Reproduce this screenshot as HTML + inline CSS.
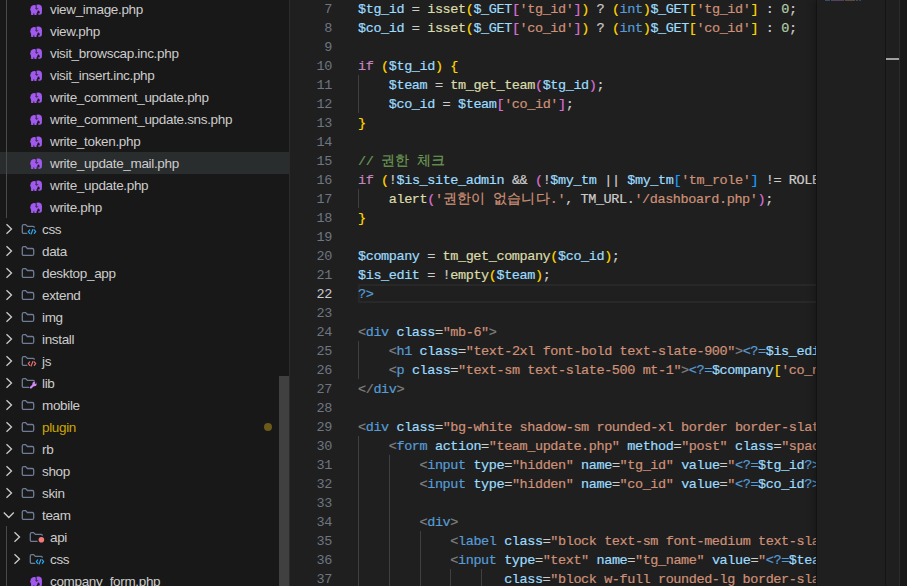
<!DOCTYPE html>
<html><head><meta charset="utf-8"><style>
html,body{margin:0;padding:0;width:907px;height:586px;overflow:hidden;background:#1f1f1f}
#side{position:absolute;left:0;top:0;width:289px;height:586px;background:#181818;overflow:hidden}
#sideb{position:absolute;left:289px;top:0;width:1px;height:586px;background:#2b2b2b}
.row{position:absolute;left:0;width:289px;height:22px}
.row.sel{background:#2a2d2e}
.nm{position:absolute;top:4px;height:22px;line-height:22px;font:13.5px "Liberation Sans",sans-serif;letter-spacing:-0.33px;color:#cccccc;white-space:pre}
.ic,.fic,.chev{display:block}
.dot{position:absolute;left:264px;top:7px;width:8px;height:8px;border-radius:50%;background:#6b5a1a}
#sscroll{position:absolute;left:279px;top:376px;width:10px;height:210px;background:#404040}
.iguide{position:absolute;left:6px;width:1px;background:#4a4a4a}
#editor{position:absolute;left:290px;top:0;width:617px;height:586px;background:#1f1f1f;overflow:hidden}
.ln{position:absolute;left:358px;height:19px;line-height:19px;font:13.5px "Liberation Mono",monospace;letter-spacing:-0.410px;white-space:pre;color:#cccccc;margin-top:3px;-webkit-text-stroke:0.2px}
.ko{font-size:14px;letter-spacing:0.2px;line-height:10px}
.num{position:absolute;left:290px;width:42px;text-align:right;height:19px;line-height:19px;font:13.5px "Liberation Mono",monospace;letter-spacing:-0.4px;color:#6e7681;margin-top:3px}
.num.act{color:#cccccc}
.guide{position:absolute;width:1px;height:19px;background:#404040}
#codeclip{position:absolute;left:0;top:0;width:816px;height:586px;overflow:hidden}
#curline{position:absolute;left:358px;width:458px;top:284px;height:15px;border:2px solid #282828;border-right:none}
#minimap{position:absolute;left:817px;top:0;width:68px;height:586px;background:#1f1f1f;box-shadow:-5px 0 6px -1px rgba(0,0,0,0.22)}
#mmsh{position:absolute;left:816px;top:0;width:1px;height:586px;background:#171717}
#vsb{position:absolute;left:885px;top:0;width:1px;height:586px;background:#151515}
#vsb2{position:absolute;left:899px;top:0;width:1px;height:586px;background:#2b2b2b}
#rightp{position:absolute;left:900px;top:0;width:7px;height:586px;background:#181818}
#cursorind{position:absolute;left:886px;top:58px;width:13px;height:2px;background:#a0a0a0}
.mm{position:absolute;top:0;height:1px}
</style></head><body>
<div id="editor"></div>
<div id="curline"></div>
<div id="codeclip"><div class="ln" style="top:-1px"><span style="color:#9cdcfe">$tg_id</span><span style="color:#cccccc"> = </span><span style="color:#dcdcaa">isset</span><span style="color:#ffd700">(</span><span style="color:#9cdcfe">$_GET</span><span style="color:#da70d6">[</span><span style="color:#ce9178">'tg_id'</span><span style="color:#da70d6">]</span><span style="color:#ffd700">)</span><span style="color:#cccccc"> ? </span><span style="color:#ffd700">(</span><span style="color:#569cd6">int</span><span style="color:#ffd700">)</span><span style="color:#9cdcfe">$_GET</span><span style="color:#ffd700">[</span><span style="color:#ce9178">'tg_id'</span><span style="color:#ffd700">]</span><span style="color:#cccccc"> : </span><span style="color:#b5cea8">0</span><span style="color:#cccccc">;</span></div><div class="num" style="top:-1px">7</div><div class="ln" style="top:18px"><span style="color:#9cdcfe">$co_id</span><span style="color:#cccccc"> = </span><span style="color:#dcdcaa">isset</span><span style="color:#ffd700">(</span><span style="color:#9cdcfe">$_GET</span><span style="color:#da70d6">[</span><span style="color:#ce9178">'co_id'</span><span style="color:#da70d6">]</span><span style="color:#ffd700">)</span><span style="color:#cccccc"> ? </span><span style="color:#ffd700">(</span><span style="color:#569cd6">int</span><span style="color:#ffd700">)</span><span style="color:#9cdcfe">$_GET</span><span style="color:#ffd700">[</span><span style="color:#ce9178">'co_id'</span><span style="color:#ffd700">]</span><span style="color:#cccccc"> : </span><span style="color:#b5cea8">0</span><span style="color:#cccccc">;</span></div><div class="num" style="top:18px">8</div><div class="ln" style="top:37px"></div><div class="num" style="top:37px">9</div><div class="ln" style="top:56px"><span style="color:#c586c0">if</span><span style="color:#cccccc"> </span><span style="color:#ffd700">(</span><span style="color:#9cdcfe">$tg_id</span><span style="color:#ffd700">)</span><span style="color:#cccccc"> </span><span style="color:#ffd700">{</span></div><div class="num" style="top:56px">10</div><div class="ln" style="top:75px"><span style="color:#cccccc">    </span><span style="color:#9cdcfe">$team</span><span style="color:#cccccc"> = </span><span style="color:#dcdcaa">tm_get_team</span><span style="color:#da70d6">(</span><span style="color:#9cdcfe">$tg_id</span><span style="color:#da70d6">)</span><span style="color:#cccccc">;</span></div><div class="num" style="top:75px">11</div><div class="guide" style="top:75px;left:358px"></div><div class="ln" style="top:94px"><span style="color:#cccccc">    </span><span style="color:#9cdcfe">$co_id</span><span style="color:#cccccc"> = </span><span style="color:#9cdcfe">$team</span><span style="color:#da70d6">[</span><span style="color:#ce9178">'co_id'</span><span style="color:#da70d6">]</span><span style="color:#cccccc">;</span></div><div class="num" style="top:94px">12</div><div class="guide" style="top:94px;left:358px"></div><div class="ln" style="top:113px"><span style="color:#ffd700">}</span></div><div class="num" style="top:113px">13</div><div class="ln" style="top:132px"></div><div class="num" style="top:132px">14</div><div class="ln" style="top:151px"><span style="color:#6a9955">// </span><span class="ko" style="color:#6a9955">권한</span><span style="color:#6a9955"> </span><span class="ko" style="color:#6a9955">체크</span></div><div class="num" style="top:151px">15</div><div class="ln" style="top:170px"><span style="color:#c586c0">if</span><span style="color:#cccccc"> </span><span style="color:#ffd700">(</span><span style="color:#cccccc">!</span><span style="color:#9cdcfe">$is_site_admin</span><span style="color:#cccccc"> &amp;&amp; </span><span style="color:#da70d6">(</span><span style="color:#cccccc">!</span><span style="color:#9cdcfe">$my_tm</span><span style="color:#cccccc"> || </span><span style="color:#9cdcfe">$my_tm</span><span style="color:#179fff">[</span><span style="color:#ce9178">'tm_role'</span><span style="color:#179fff">]</span><span style="color:#cccccc"> != ROLE_ADMIN</span></div><div class="num" style="top:170px">16</div><div class="ln" style="top:189px"><span style="color:#cccccc">    </span><span style="color:#dcdcaa">alert</span><span style="color:#da70d6">(</span><span style="color:#ce9178">'</span><span class="ko" style="color:#ce9178">권한이</span><span style="color:#ce9178"> </span><span class="ko" style="color:#ce9178">없습니다</span><span style="color:#ce9178">.'</span><span style="color:#cccccc">, TM_URL.</span><span style="color:#ce9178">'/dashboard.php'</span><span style="color:#da70d6">)</span><span style="color:#cccccc">;</span></div><div class="num" style="top:189px">17</div><div class="guide" style="top:189px;left:358px"></div><div class="ln" style="top:208px"><span style="color:#ffd700">}</span></div><div class="num" style="top:208px">18</div><div class="ln" style="top:227px"></div><div class="num" style="top:227px">19</div><div class="ln" style="top:246px"><span style="color:#9cdcfe">$company</span><span style="color:#cccccc"> = </span><span style="color:#dcdcaa">tm_get_company</span><span style="color:#ffd700">(</span><span style="color:#9cdcfe">$co_id</span><span style="color:#ffd700">)</span><span style="color:#cccccc">;</span></div><div class="num" style="top:246px">20</div><div class="ln" style="top:265px"><span style="color:#9cdcfe">$is_edit</span><span style="color:#cccccc"> = </span><span style="color:#cccccc">!</span><span style="color:#dcdcaa">empty</span><span style="color:#ffd700">(</span><span style="color:#9cdcfe">$team</span><span style="color:#ffd700">)</span><span style="color:#cccccc">;</span></div><div class="num" style="top:265px">21</div><div class="ln" style="top:284px"><span style="color:#569cd6">?&gt;</span></div><div class="num act" style="top:284px">22</div><div class="ln" style="top:303px"></div><div class="num" style="top:303px">23</div><div class="ln" style="top:322px"><span style="color:#808080">&lt;</span><span style="color:#569cd6">div</span><span style="color:#cccccc"> </span><span style="color:#9cdcfe">class</span><span style="color:#cccccc">=</span><span style="color:#ce9178">"mb-6"</span><span style="color:#808080">&gt;</span></div><div class="num" style="top:322px">24</div><div class="ln" style="top:341px"><span style="color:#cccccc">    </span><span style="color:#808080">&lt;</span><span style="color:#569cd6">h1</span><span style="color:#cccccc"> </span><span style="color:#9cdcfe">class</span><span style="color:#cccccc">=</span><span style="color:#ce9178">"text-2xl font-bold text-slate-900"</span><span style="color:#808080">&gt;</span><span style="color:#569cd6">&lt;?=</span><span style="color:#9cdcfe">$is_edit</span><span style="color:#cccccc"> ? </span></div><div class="num" style="top:341px">25</div><div class="guide" style="top:341px;left:358px"></div><div class="ln" style="top:360px"><span style="color:#cccccc">    </span><span style="color:#808080">&lt;</span><span style="color:#569cd6">p</span><span style="color:#cccccc"> </span><span style="color:#9cdcfe">class</span><span style="color:#cccccc">=</span><span style="color:#ce9178">"text-sm text-slate-500 mt-1"</span><span style="color:#808080">&gt;</span><span style="color:#569cd6">&lt;?=</span><span style="color:#9cdcfe">$company</span><span style="color:#ffd700">[</span><span style="color:#ce9178">'co_name'</span></div><div class="num" style="top:360px">26</div><div class="guide" style="top:360px;left:358px"></div><div class="ln" style="top:379px"><span style="color:#808080">&lt;/</span><span style="color:#569cd6">div</span><span style="color:#808080">&gt;</span></div><div class="num" style="top:379px">27</div><div class="ln" style="top:398px"></div><div class="num" style="top:398px">28</div><div class="ln" style="top:417px"><span style="color:#808080">&lt;</span><span style="color:#569cd6">div</span><span style="color:#cccccc"> </span><span style="color:#9cdcfe">class</span><span style="color:#cccccc">=</span><span style="color:#ce9178">"bg-white shadow-sm rounded-xl border border-slate-200 p-6"</span></div><div class="num" style="top:417px">29</div><div class="ln" style="top:436px"><span style="color:#cccccc">    </span><span style="color:#808080">&lt;</span><span style="color:#569cd6">form</span><span style="color:#cccccc"> </span><span style="color:#9cdcfe">action</span><span style="color:#cccccc">=</span><span style="color:#ce9178">"team_update.php"</span><span style="color:#cccccc"> </span><span style="color:#9cdcfe">method</span><span style="color:#cccccc">=</span><span style="color:#ce9178">"post"</span><span style="color:#cccccc"> </span><span style="color:#9cdcfe">class</span><span style="color:#cccccc">=</span><span style="color:#ce9178">"space-y-5"</span></div><div class="num" style="top:436px">30</div><div class="guide" style="top:436px;left:358px"></div><div class="ln" style="top:455px"><span style="color:#cccccc">        </span><span style="color:#808080">&lt;</span><span style="color:#569cd6">input</span><span style="color:#cccccc"> </span><span style="color:#9cdcfe">type</span><span style="color:#cccccc">=</span><span style="color:#ce9178">"hidden"</span><span style="color:#cccccc"> </span><span style="color:#9cdcfe">name</span><span style="color:#cccccc">=</span><span style="color:#ce9178">"tg_id"</span><span style="color:#cccccc"> </span><span style="color:#9cdcfe">value</span><span style="color:#cccccc">=</span><span style="color:#ce9178">"</span><span style="color:#569cd6">&lt;?=</span><span style="color:#9cdcfe">$tg_id</span><span style="color:#569cd6">?&gt;</span><span style="color:#ce9178">"</span><span style="color:#808080">&gt;</span></div><div class="num" style="top:455px">31</div><div class="guide" style="top:455px;left:358px"></div><div class="guide" style="top:455px;left:389px"></div><div class="ln" style="top:474px"><span style="color:#cccccc">        </span><span style="color:#808080">&lt;</span><span style="color:#569cd6">input</span><span style="color:#cccccc"> </span><span style="color:#9cdcfe">type</span><span style="color:#cccccc">=</span><span style="color:#ce9178">"hidden"</span><span style="color:#cccccc"> </span><span style="color:#9cdcfe">name</span><span style="color:#cccccc">=</span><span style="color:#ce9178">"co_id"</span><span style="color:#cccccc"> </span><span style="color:#9cdcfe">value</span><span style="color:#cccccc">=</span><span style="color:#ce9178">"</span><span style="color:#569cd6">&lt;?=</span><span style="color:#9cdcfe">$co_id</span><span style="color:#569cd6">?&gt;</span><span style="color:#ce9178">"</span><span style="color:#808080">&gt;</span></div><div class="num" style="top:474px">32</div><div class="guide" style="top:474px;left:358px"></div><div class="guide" style="top:474px;left:389px"></div><div class="ln" style="top:493px"></div><div class="num" style="top:493px">33</div><div class="guide" style="top:493px;left:358px"></div><div class="guide" style="top:493px;left:389px"></div><div class="ln" style="top:512px"><span style="color:#cccccc">        </span><span style="color:#808080">&lt;</span><span style="color:#569cd6">div</span><span style="color:#808080">&gt;</span></div><div class="num" style="top:512px">34</div><div class="guide" style="top:512px;left:358px"></div><div class="guide" style="top:512px;left:389px"></div><div class="ln" style="top:531px"><span style="color:#cccccc">            </span><span style="color:#808080">&lt;</span><span style="color:#569cd6">label</span><span style="color:#cccccc"> </span><span style="color:#9cdcfe">class</span><span style="color:#cccccc">=</span><span style="color:#ce9178">"block text-sm font-medium text-slate-700 mb-1"</span></div><div class="num" style="top:531px">35</div><div class="guide" style="top:531px;left:358px"></div><div class="guide" style="top:531px;left:389px"></div><div class="guide" style="top:531px;left:420px"></div><div class="ln" style="top:550px"><span style="color:#cccccc">            </span><span style="color:#808080">&lt;</span><span style="color:#569cd6">input</span><span style="color:#cccccc"> </span><span style="color:#9cdcfe">type</span><span style="color:#cccccc">=</span><span style="color:#ce9178">"text"</span><span style="color:#cccccc"> </span><span style="color:#9cdcfe">name</span><span style="color:#cccccc">=</span><span style="color:#ce9178">"tg_name"</span><span style="color:#cccccc"> </span><span style="color:#9cdcfe">value</span><span style="color:#cccccc">=</span><span style="color:#ce9178">"</span><span style="color:#569cd6">&lt;?=</span><span style="color:#9cdcfe">$team</span><span style="color:#ffd700">[</span><span style="color:#ce9178">'tg_name'</span></div><div class="num" style="top:550px">36</div><div class="guide" style="top:550px;left:358px"></div><div class="guide" style="top:550px;left:389px"></div><div class="guide" style="top:550px;left:420px"></div><div class="ln" style="top:569px"><span style="color:#cccccc">                   </span><span style="color:#9cdcfe">class</span><span style="color:#cccccc">=</span><span style="color:#ce9178">"block w-full rounded-lg border-slate-300"</span></div><div class="num" style="top:569px">37</div><div class="guide" style="top:569px;left:358px"></div><div class="guide" style="top:569px;left:389px"></div><div class="guide" style="top:569px;left:420px"></div><div class="guide" style="top:569px;left:450px"></div><div class="guide" style="top:569px;left:481px"></div></div>
<div id="mmsh"></div>
<div id="minimap">
<div class="mm" style="left:8px;width:5px;background:#2e4f6e"></div>
<div class="mm" style="left:14px;width:13px;background:#54405f"></div>
<div class="mm" style="left:28px;width:10px;background:#5e4a3c"></div>
<div class="mm" style="left:39px;width:2px;background:#484848"></div>
<div class="mm" style="left:42px;width:2px;background:#2e4a66"></div>
</div>
<div id="vsb"></div><div id="vsb2"></div><div id="rightp"></div><div id="cursorind"></div>
<div id="side">
<div class="row" style="top:-2px"><span style="position:absolute;left:30px;top:5px"><svg class="ic" width="12" height="12" viewBox="0 0 12 12"><g fill="#a259f0"><ellipse cx="4.4" cy="6.2" rx="4.1" ry="4.3"/><rect x="1.1" y="8" width="2.3" height="3.9" rx=".4"/><rect x="4.3" y="8" width="2.3" height="3.9" rx=".4"/><circle cx="8.2" cy="5.1" r="3.7"/><path d="M9.3 5h2.6v4.6c0 1.5-1 2.2-2.3 2.2-1 0-1.7-.5-1.9-1.3h1.4c.4 0 .6-.3.6-.7z"/></g><g fill="none" stroke="#1a1a1a"><path stroke-width="1" d="M5.4 1.2c1 1.3 1.1 2.9.5 4.7c.8.4 1.6.2 2.1-.6"/></g><circle cx="8.4" cy="8.4" r=".9" fill="#1a1a1a"/></svg></span><span class="nm" style="left:50px">view_image.php</span></div><div class="row" style="top:20px"><span style="position:absolute;left:30px;top:5px"><svg class="ic" width="12" height="12" viewBox="0 0 12 12"><g fill="#a259f0"><ellipse cx="4.4" cy="6.2" rx="4.1" ry="4.3"/><rect x="1.1" y="8" width="2.3" height="3.9" rx=".4"/><rect x="4.3" y="8" width="2.3" height="3.9" rx=".4"/><circle cx="8.2" cy="5.1" r="3.7"/><path d="M9.3 5h2.6v4.6c0 1.5-1 2.2-2.3 2.2-1 0-1.7-.5-1.9-1.3h1.4c.4 0 .6-.3.6-.7z"/></g><g fill="none" stroke="#1a1a1a"><path stroke-width="1" d="M5.4 1.2c1 1.3 1.1 2.9.5 4.7c.8.4 1.6.2 2.1-.6"/></g><circle cx="8.4" cy="8.4" r=".9" fill="#1a1a1a"/></svg></span><span class="nm" style="left:50px">view.php</span></div><div class="row" style="top:42px"><span style="position:absolute;left:30px;top:5px"><svg class="ic" width="12" height="12" viewBox="0 0 12 12"><g fill="#a259f0"><ellipse cx="4.4" cy="6.2" rx="4.1" ry="4.3"/><rect x="1.1" y="8" width="2.3" height="3.9" rx=".4"/><rect x="4.3" y="8" width="2.3" height="3.9" rx=".4"/><circle cx="8.2" cy="5.1" r="3.7"/><path d="M9.3 5h2.6v4.6c0 1.5-1 2.2-2.3 2.2-1 0-1.7-.5-1.9-1.3h1.4c.4 0 .6-.3.6-.7z"/></g><g fill="none" stroke="#1a1a1a"><path stroke-width="1" d="M5.4 1.2c1 1.3 1.1 2.9.5 4.7c.8.4 1.6.2 2.1-.6"/></g><circle cx="8.4" cy="8.4" r=".9" fill="#1a1a1a"/></svg></span><span class="nm" style="left:50px">visit_browscap.inc.php</span></div><div class="row" style="top:64px"><span style="position:absolute;left:30px;top:5px"><svg class="ic" width="12" height="12" viewBox="0 0 12 12"><g fill="#a259f0"><ellipse cx="4.4" cy="6.2" rx="4.1" ry="4.3"/><rect x="1.1" y="8" width="2.3" height="3.9" rx=".4"/><rect x="4.3" y="8" width="2.3" height="3.9" rx=".4"/><circle cx="8.2" cy="5.1" r="3.7"/><path d="M9.3 5h2.6v4.6c0 1.5-1 2.2-2.3 2.2-1 0-1.7-.5-1.9-1.3h1.4c.4 0 .6-.3.6-.7z"/></g><g fill="none" stroke="#1a1a1a"><path stroke-width="1" d="M5.4 1.2c1 1.3 1.1 2.9.5 4.7c.8.4 1.6.2 2.1-.6"/></g><circle cx="8.4" cy="8.4" r=".9" fill="#1a1a1a"/></svg></span><span class="nm" style="left:50px">visit_insert.inc.php</span></div><div class="row" style="top:86px"><span style="position:absolute;left:30px;top:5px"><svg class="ic" width="12" height="12" viewBox="0 0 12 12"><g fill="#a259f0"><ellipse cx="4.4" cy="6.2" rx="4.1" ry="4.3"/><rect x="1.1" y="8" width="2.3" height="3.9" rx=".4"/><rect x="4.3" y="8" width="2.3" height="3.9" rx=".4"/><circle cx="8.2" cy="5.1" r="3.7"/><path d="M9.3 5h2.6v4.6c0 1.5-1 2.2-2.3 2.2-1 0-1.7-.5-1.9-1.3h1.4c.4 0 .6-.3.6-.7z"/></g><g fill="none" stroke="#1a1a1a"><path stroke-width="1" d="M5.4 1.2c1 1.3 1.1 2.9.5 4.7c.8.4 1.6.2 2.1-.6"/></g><circle cx="8.4" cy="8.4" r=".9" fill="#1a1a1a"/></svg></span><span class="nm" style="left:50px">write_comment_update.php</span></div><div class="row" style="top:108px"><span style="position:absolute;left:30px;top:5px"><svg class="ic" width="12" height="12" viewBox="0 0 12 12"><g fill="#a259f0"><ellipse cx="4.4" cy="6.2" rx="4.1" ry="4.3"/><rect x="1.1" y="8" width="2.3" height="3.9" rx=".4"/><rect x="4.3" y="8" width="2.3" height="3.9" rx=".4"/><circle cx="8.2" cy="5.1" r="3.7"/><path d="M9.3 5h2.6v4.6c0 1.5-1 2.2-2.3 2.2-1 0-1.7-.5-1.9-1.3h1.4c.4 0 .6-.3.6-.7z"/></g><g fill="none" stroke="#1a1a1a"><path stroke-width="1" d="M5.4 1.2c1 1.3 1.1 2.9.5 4.7c.8.4 1.6.2 2.1-.6"/></g><circle cx="8.4" cy="8.4" r=".9" fill="#1a1a1a"/></svg></span><span class="nm" style="left:50px">write_comment_update.sns.php</span></div><div class="row" style="top:130px"><span style="position:absolute;left:30px;top:5px"><svg class="ic" width="12" height="12" viewBox="0 0 12 12"><g fill="#a259f0"><ellipse cx="4.4" cy="6.2" rx="4.1" ry="4.3"/><rect x="1.1" y="8" width="2.3" height="3.9" rx=".4"/><rect x="4.3" y="8" width="2.3" height="3.9" rx=".4"/><circle cx="8.2" cy="5.1" r="3.7"/><path d="M9.3 5h2.6v4.6c0 1.5-1 2.2-2.3 2.2-1 0-1.7-.5-1.9-1.3h1.4c.4 0 .6-.3.6-.7z"/></g><g fill="none" stroke="#1a1a1a"><path stroke-width="1" d="M5.4 1.2c1 1.3 1.1 2.9.5 4.7c.8.4 1.6.2 2.1-.6"/></g><circle cx="8.4" cy="8.4" r=".9" fill="#1a1a1a"/></svg></span><span class="nm" style="left:50px">write_token.php</span></div><div class="row sel" style="top:152px"><span style="position:absolute;left:30px;top:5px"><svg class="ic" width="12" height="12" viewBox="0 0 12 12"><g fill="#a259f0"><ellipse cx="4.4" cy="6.2" rx="4.1" ry="4.3"/><rect x="1.1" y="8" width="2.3" height="3.9" rx=".4"/><rect x="4.3" y="8" width="2.3" height="3.9" rx=".4"/><circle cx="8.2" cy="5.1" r="3.7"/><path d="M9.3 5h2.6v4.6c0 1.5-1 2.2-2.3 2.2-1 0-1.7-.5-1.9-1.3h1.4c.4 0 .6-.3.6-.7z"/></g><g fill="none" stroke="#1a1a1a"><path stroke-width="1" d="M5.4 1.2c1 1.3 1.1 2.9.5 4.7c.8.4 1.6.2 2.1-.6"/></g><circle cx="8.4" cy="8.4" r=".9" fill="#1a1a1a"/></svg></span><span class="nm" style="left:50px">write_update_mail.php</span></div><div class="row" style="top:174px"><span style="position:absolute;left:30px;top:5px"><svg class="ic" width="12" height="12" viewBox="0 0 12 12"><g fill="#a259f0"><ellipse cx="4.4" cy="6.2" rx="4.1" ry="4.3"/><rect x="1.1" y="8" width="2.3" height="3.9" rx=".4"/><rect x="4.3" y="8" width="2.3" height="3.9" rx=".4"/><circle cx="8.2" cy="5.1" r="3.7"/><path d="M9.3 5h2.6v4.6c0 1.5-1 2.2-2.3 2.2-1 0-1.7-.5-1.9-1.3h1.4c.4 0 .6-.3.6-.7z"/></g><g fill="none" stroke="#1a1a1a"><path stroke-width="1" d="M5.4 1.2c1 1.3 1.1 2.9.5 4.7c.8.4 1.6.2 2.1-.6"/></g><circle cx="8.4" cy="8.4" r=".9" fill="#1a1a1a"/></svg></span><span class="nm" style="left:50px">write_update.php</span></div><div class="row" style="top:196px"><span style="position:absolute;left:30px;top:5px"><svg class="ic" width="12" height="12" viewBox="0 0 12 12"><g fill="#a259f0"><ellipse cx="4.4" cy="6.2" rx="4.1" ry="4.3"/><rect x="1.1" y="8" width="2.3" height="3.9" rx=".4"/><rect x="4.3" y="8" width="2.3" height="3.9" rx=".4"/><circle cx="8.2" cy="5.1" r="3.7"/><path d="M9.3 5h2.6v4.6c0 1.5-1 2.2-2.3 2.2-1 0-1.7-.5-1.9-1.3h1.4c.4 0 .6-.3.6-.7z"/></g><g fill="none" stroke="#1a1a1a"><path stroke-width="1" d="M5.4 1.2c1 1.3 1.1 2.9.5 4.7c.8.4 1.6.2 2.1-.6"/></g><circle cx="8.4" cy="8.4" r=".9" fill="#1a1a1a"/></svg></span><span class="nm" style="left:50px">write.php</span></div><div class="row" style="top:218px"><span style="position:absolute;left:4px;top:5px"><svg class="chev" width="10" height="12" viewBox="0 0 10 12"><path fill="none" stroke="#cccccc" stroke-width="1.3" d="M2.5 1.2l5 4.8-5 4.8"/></svg></span><span style="position:absolute;left:20px;top:5px"><svg class="fic" width="18" height="12" viewBox="0 0 18 12"><path fill="none" stroke="#6e7d95" stroke-width="1.3" stroke-linecap="round" d="M6.8 10.4H3.8Q2.3 10.4 2.3 8.9V3.1Q2.3 1.6 3.8 1.6H5.6L7.4 3.4H13Q13.9 3.4 14.3 4.1"/><path fill="none" stroke="#29a9f0" stroke-width="1.2" stroke-linecap="round" stroke-linejoin="round" d="M9.7 6.9L8.3 8.6L9.7 10.3M14.3 6.9L15.7 8.6L14.3 10.3M12.9 6.6L11.1 10.9"/></svg></span><span class="nm" style="left:42px">css</span></div><div class="row" style="top:240px"><span style="position:absolute;left:4px;top:5px"><svg class="chev" width="10" height="12" viewBox="0 0 10 12"><path fill="none" stroke="#cccccc" stroke-width="1.3" d="M2.5 1.2l5 4.8-5 4.8"/></svg></span><span style="position:absolute;left:20px;top:5px"><svg class="fic" width="18" height="12" viewBox="0 0 18 12"><path fill="none" stroke="#6e7d95" stroke-width="1.3" d="M2.3 3.1Q2.3 1.6 3.8 1.6H5.6L7.4 3.5H12.2Q13.7 3.5 13.7 5V8.9Q13.7 10.4 12.2 10.4H3.8Q2.3 10.4 2.3 8.9Z"/></svg></span><span class="nm" style="left:42px">data</span></div><div class="row" style="top:262px"><span style="position:absolute;left:4px;top:5px"><svg class="chev" width="10" height="12" viewBox="0 0 10 12"><path fill="none" stroke="#cccccc" stroke-width="1.3" d="M2.5 1.2l5 4.8-5 4.8"/></svg></span><span style="position:absolute;left:20px;top:5px"><svg class="fic" width="18" height="12" viewBox="0 0 18 12"><path fill="none" stroke="#6e7d95" stroke-width="1.3" d="M2.3 3.1Q2.3 1.6 3.8 1.6H5.6L7.4 3.5H12.2Q13.7 3.5 13.7 5V8.9Q13.7 10.4 12.2 10.4H3.8Q2.3 10.4 2.3 8.9Z"/></svg></span><span class="nm" style="left:42px">desktop_app</span></div><div class="row" style="top:284px"><span style="position:absolute;left:4px;top:5px"><svg class="chev" width="10" height="12" viewBox="0 0 10 12"><path fill="none" stroke="#cccccc" stroke-width="1.3" d="M2.5 1.2l5 4.8-5 4.8"/></svg></span><span style="position:absolute;left:20px;top:5px"><svg class="fic" width="18" height="12" viewBox="0 0 18 12"><path fill="none" stroke="#6e7d95" stroke-width="1.3" d="M2.3 3.1Q2.3 1.6 3.8 1.6H5.6L7.4 3.5H12.2Q13.7 3.5 13.7 5V8.9Q13.7 10.4 12.2 10.4H3.8Q2.3 10.4 2.3 8.9Z"/></svg></span><span class="nm" style="left:42px">extend</span></div><div class="row" style="top:306px"><span style="position:absolute;left:4px;top:5px"><svg class="chev" width="10" height="12" viewBox="0 0 10 12"><path fill="none" stroke="#cccccc" stroke-width="1.3" d="M2.5 1.2l5 4.8-5 4.8"/></svg></span><span style="position:absolute;left:20px;top:5px"><svg class="fic" width="18" height="12" viewBox="0 0 18 12"><path fill="none" stroke="#6e7d95" stroke-width="1.3" d="M2.3 3.1Q2.3 1.6 3.8 1.6H5.6L7.4 3.5H12.2Q13.7 3.5 13.7 5V8.9Q13.7 10.4 12.2 10.4H3.8Q2.3 10.4 2.3 8.9Z"/></svg></span><span class="nm" style="left:42px">img</span></div><div class="row" style="top:328px"><span style="position:absolute;left:4px;top:5px"><svg class="chev" width="10" height="12" viewBox="0 0 10 12"><path fill="none" stroke="#cccccc" stroke-width="1.3" d="M2.5 1.2l5 4.8-5 4.8"/></svg></span><span style="position:absolute;left:20px;top:5px"><svg class="fic" width="18" height="12" viewBox="0 0 18 12"><path fill="none" stroke="#6e7d95" stroke-width="1.3" d="M2.3 3.1Q2.3 1.6 3.8 1.6H5.6L7.4 3.5H12.2Q13.7 3.5 13.7 5V8.9Q13.7 10.4 12.2 10.4H3.8Q2.3 10.4 2.3 8.9Z"/></svg></span><span class="nm" style="left:42px">install</span></div><div class="row" style="top:350px"><span style="position:absolute;left:4px;top:5px"><svg class="chev" width="10" height="12" viewBox="0 0 10 12"><path fill="none" stroke="#cccccc" stroke-width="1.3" d="M2.5 1.2l5 4.8-5 4.8"/></svg></span><span style="position:absolute;left:20px;top:5px"><svg class="fic" width="18" height="12" viewBox="0 0 18 12"><path fill="none" stroke="#6e7d95" stroke-width="1.3" stroke-linecap="round" d="M6.8 10.4H3.8Q2.3 10.4 2.3 8.9V3.1Q2.3 1.6 3.8 1.6H5.6L7.4 3.4H13Q13.9 3.4 14.3 4.1"/><path fill="none" stroke="#e86f6f" stroke-width="1.2" stroke-linecap="round" stroke-linejoin="round" d="M9.7 6.9L8.3 8.6L9.7 10.3M14.3 6.9L15.7 8.6L14.3 10.3M12.9 6.6L11.1 10.9"/></svg></span><span class="nm" style="left:42px">js</span></div><div class="row" style="top:372px"><span style="position:absolute;left:4px;top:5px"><svg class="chev" width="10" height="12" viewBox="0 0 10 12"><path fill="none" stroke="#cccccc" stroke-width="1.3" d="M2.5 1.2l5 4.8-5 4.8"/></svg></span><span style="position:absolute;left:20px;top:5px"><svg class="fic" width="18" height="12" viewBox="0 0 18 12"><path fill="none" stroke="#6e7d95" stroke-width="1.3" stroke-linecap="round" d="M8.8 10.4H3.8Q2.3 10.4 2.3 8.9V3.1Q2.3 1.6 3.8 1.6H5.6L7.4 3.4H13Q13.9 3.4 14.3 4.1"/><path fill="none" stroke="#d48af5" stroke-width="2.2" stroke-linecap="round" d="M10.9 10.5L13.8 7.7"/><circle cx="14.5" cy="7.0" r="2.2" fill="#d48af5"/><circle cx="15.6" cy="5.9" r=".85" fill="#181818"/></svg></span><span class="nm" style="left:42px">lib</span></div><div class="row" style="top:394px"><span style="position:absolute;left:4px;top:5px"><svg class="chev" width="10" height="12" viewBox="0 0 10 12"><path fill="none" stroke="#cccccc" stroke-width="1.3" d="M2.5 1.2l5 4.8-5 4.8"/></svg></span><span style="position:absolute;left:20px;top:5px"><svg class="fic" width="18" height="12" viewBox="0 0 18 12"><path fill="none" stroke="#6e7d95" stroke-width="1.3" d="M2.3 3.1Q2.3 1.6 3.8 1.6H5.6L7.4 3.5H12.2Q13.7 3.5 13.7 5V8.9Q13.7 10.4 12.2 10.4H3.8Q2.3 10.4 2.3 8.9Z"/></svg></span><span class="nm" style="left:42px">mobile</span></div><div class="row" style="top:416px"><span style="position:absolute;left:4px;top:5px"><svg class="chev" width="10" height="12" viewBox="0 0 10 12"><path fill="none" stroke="#cccccc" stroke-width="1.3" d="M2.5 1.2l5 4.8-5 4.8"/></svg></span><span style="position:absolute;left:20px;top:5px"><svg class="fic" width="18" height="12" viewBox="0 0 18 12"><path fill="none" stroke="#6e7d95" stroke-width="1.3" d="M2.3 3.1Q2.3 1.6 3.8 1.6H5.6L7.4 3.5H12.2Q13.7 3.5 13.7 5V8.9Q13.7 10.4 12.2 10.4H3.8Q2.3 10.4 2.3 8.9Z"/></svg></span><span class="nm" style="color:#cca700;left:42px">plugin</span><span class="dot"></span></div><div class="row" style="top:438px"><span style="position:absolute;left:4px;top:5px"><svg class="chev" width="10" height="12" viewBox="0 0 10 12"><path fill="none" stroke="#cccccc" stroke-width="1.3" d="M2.5 1.2l5 4.8-5 4.8"/></svg></span><span style="position:absolute;left:20px;top:5px"><svg class="fic" width="18" height="12" viewBox="0 0 18 12"><path fill="none" stroke="#6e7d95" stroke-width="1.3" d="M2.3 3.1Q2.3 1.6 3.8 1.6H5.6L7.4 3.5H12.2Q13.7 3.5 13.7 5V8.9Q13.7 10.4 12.2 10.4H3.8Q2.3 10.4 2.3 8.9Z"/></svg></span><span class="nm" style="left:42px">rb</span></div><div class="row" style="top:460px"><span style="position:absolute;left:4px;top:5px"><svg class="chev" width="10" height="12" viewBox="0 0 10 12"><path fill="none" stroke="#cccccc" stroke-width="1.3" d="M2.5 1.2l5 4.8-5 4.8"/></svg></span><span style="position:absolute;left:20px;top:5px"><svg class="fic" width="18" height="12" viewBox="0 0 18 12"><path fill="none" stroke="#6e7d95" stroke-width="1.3" d="M2.3 3.1Q2.3 1.6 3.8 1.6H5.6L7.4 3.5H12.2Q13.7 3.5 13.7 5V8.9Q13.7 10.4 12.2 10.4H3.8Q2.3 10.4 2.3 8.9Z"/></svg></span><span class="nm" style="left:42px">shop</span></div><div class="row" style="top:482px"><span style="position:absolute;left:4px;top:5px"><svg class="chev" width="10" height="12" viewBox="0 0 10 12"><path fill="none" stroke="#cccccc" stroke-width="1.3" d="M2.5 1.2l5 4.8-5 4.8"/></svg></span><span style="position:absolute;left:20px;top:5px"><svg class="fic" width="18" height="12" viewBox="0 0 18 12"><path fill="none" stroke="#6e7d95" stroke-width="1.3" d="M2.3 3.1Q2.3 1.6 3.8 1.6H5.6L7.4 3.5H12.2Q13.7 3.5 13.7 5V8.9Q13.7 10.4 12.2 10.4H3.8Q2.3 10.4 2.3 8.9Z"/></svg></span><span class="nm" style="left:42px">skin</span></div><div class="row" style="top:504px"><span style="position:absolute;left:3px;top:6px"><svg class="chev" width="12" height="10" viewBox="0 0 12 10"><path fill="none" stroke="#cccccc" stroke-width="1.3" d="M0.8 2.5l5 5 5-5"/></svg></span><span style="position:absolute;left:20px;top:5px"><svg class="fic" width="18" height="12" viewBox="0 0 18 12"><path fill="none" stroke="#6e7d95" stroke-width="1.3" d="M2.3 3.1Q2.3 1.6 3.8 1.6H5.6L7.4 3.5H12.2Q13.7 3.5 13.7 5V8.9Q13.7 10.4 12.2 10.4H3.8Q2.3 10.4 2.3 8.9Z"/></svg></span><span class="nm" style="left:42px">team</span></div><div class="row" style="top:526px"><span style="position:absolute;left:12px;top:5px"><svg class="chev" width="10" height="12" viewBox="0 0 10 12"><path fill="none" stroke="#cccccc" stroke-width="1.3" d="M2.5 1.2l5 4.8-5 4.8"/></svg></span><span style="position:absolute;left:28px;top:5px"><svg class="fic" width="18" height="12" viewBox="0 0 18 12"><path fill="none" stroke="#6e7d95" stroke-width="1.3" stroke-linecap="round" d="M9.0 10.4H3.8Q2.3 10.4 2.3 8.9V3.1Q2.3 1.6 3.8 1.6H5.6L7.4 3.4H13Q13.9 3.4 14.3 4.1"/><circle cx="13.4" cy="8.7" r="2.8" fill="#f47a7a"/></svg></span><span class="nm" style="left:50px">api</span></div><div class="row" style="top:548px"><span style="position:absolute;left:12px;top:5px"><svg class="chev" width="10" height="12" viewBox="0 0 10 12"><path fill="none" stroke="#cccccc" stroke-width="1.3" d="M2.5 1.2l5 4.8-5 4.8"/></svg></span><span style="position:absolute;left:28px;top:5px"><svg class="fic" width="18" height="12" viewBox="0 0 18 12"><path fill="none" stroke="#6e7d95" stroke-width="1.3" stroke-linecap="round" d="M6.8 10.4H3.8Q2.3 10.4 2.3 8.9V3.1Q2.3 1.6 3.8 1.6H5.6L7.4 3.4H13Q13.9 3.4 14.3 4.1"/><path fill="none" stroke="#29a9f0" stroke-width="1.2" stroke-linecap="round" stroke-linejoin="round" d="M9.7 6.9L8.3 8.6L9.7 10.3M14.3 6.9L15.7 8.6L14.3 10.3M12.9 6.6L11.1 10.9"/></svg></span><span class="nm" style="left:50px">css</span></div><div class="row" style="top:570px"><span style="position:absolute;left:30px;top:5px"><svg class="ic" width="12" height="12" viewBox="0 0 12 12"><g fill="#a259f0"><ellipse cx="4.4" cy="6.2" rx="4.1" ry="4.3"/><rect x="1.1" y="8" width="2.3" height="3.9" rx=".4"/><rect x="4.3" y="8" width="2.3" height="3.9" rx=".4"/><circle cx="8.2" cy="5.1" r="3.7"/><path d="M9.3 5h2.6v4.6c0 1.5-1 2.2-2.3 2.2-1 0-1.7-.5-1.9-1.3h1.4c.4 0 .6-.3.6-.7z"/></g><g fill="none" stroke="#1a1a1a"><path stroke-width="1" d="M5.4 1.2c1 1.3 1.1 2.9.5 4.7c.8.4 1.6.2 2.1-.6"/></g><circle cx="8.4" cy="8.4" r=".9" fill="#1a1a1a"/></svg></span><span class="nm" style="left:50px">company_form.php</span></div>
<div class="iguide" style="top:-2px;height:220px"></div>
<div class="iguide" style="top:526px;height:60px"></div>
<div id="sscroll"></div>
</div>
<div id="sideb"></div>
</body></html>
